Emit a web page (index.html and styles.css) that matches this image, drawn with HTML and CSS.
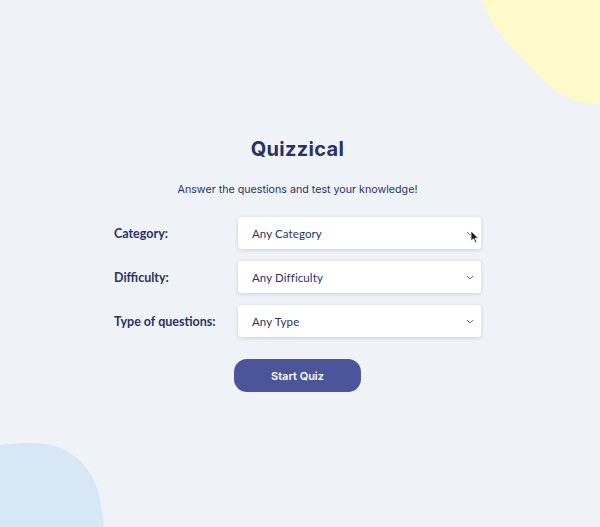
FILE: index.html
```html
<!DOCTYPE html>
<html lang="en">
<head>
<meta charset="utf-8">
<title>Quizzical</title>
<link rel="stylesheet" href="styles.css">
</head>
<body>
<svg class="blob blob-yellow" width="118" height="105" viewBox="0 0 118 105" aria-hidden="true">
  <path d="M0 0 H118 V104 C100 104 85 100 70 88 C58 78 48 66 36 54 C22 40 8 24 0 0 Z" fill="#FFF8C8"/>
</svg>
<svg class="blob blob-blue" width="104" height="84" viewBox="0 0 104 84" aria-hidden="true">
  <path d="M0 2 C15 0 30 -1 45 1 C70 4 90 22 98 48 C101 60 103 72 104 84 H0 Z" fill="#D8E7F6"/>
</svg>
<main class="page">
  <h1 class="title">Quizzical</h1>
  <p class="subtitle">Answer the questions and test your knowledge!</p>
  <form class="form">
    <div class="row">
      <span class="label">Category:</span>
      <div class="select">
        <span>Any Category</span>
        <svg class="chev" width="8" height="5" viewBox="0 0 8 5"><path d="M1 1 L4 4 L7 1" fill="none" stroke="#6b6f80" stroke-width="1"/></svg>
        <svg class="cursor" width="10" height="14" viewBox="0 0 10 14"><path d="M1 1 L1 11 L3.5 8.8 L5.5 13 L7 12.3 L5 8.2 L8.5 8.2 Z" fill="#1a1a1a" stroke="#fff" stroke-width="0.8"/></svg>
      </div>
    </div>
    <div class="row">
      <span class="label">Difficulty:</span>
      <div class="select">
        <span>Any Difficulty</span>
        <svg class="chev" width="8" height="5" viewBox="0 0 8 5"><path d="M1 1 L4 4 L7 1" fill="none" stroke="#6b6f80" stroke-width="1"/></svg>
      </div>
    </div>
    <div class="row">
      <span class="label">Type of questions:</span>
      <div class="select">
        <span>Any Type</span>
        <svg class="chev" width="8" height="5" viewBox="0 0 8 5"><path d="M1 1 L4 4 L7 1" fill="none" stroke="#6b6f80" stroke-width="1"/></svg>
      </div>
    </div>
  </form>
  <button class="start" type="button">Start Quiz</button>
</main>
</body>
</html>
```
FILE: styles.css
```css
* { box-sizing: border-box; }
html, body { margin: 0; padding: 0; }
body {
  width: 600px;
  height: 527px;
  overflow: hidden;
  position: relative;
  background: #EFF3F8;
  font-family: Inter, "Noto Sans", sans-serif;
  color: #293264;
}
.blob { position: absolute; display: block; }
.blob-yellow { top: 0; right: 0; }
.blob-blue { bottom: 0; left: 0; }
.page {
  position: relative;
  display: flex;
  flex-direction: column;
  align-items: center;
  padding-top: 135px;
  padding-right: 5px;
}
.title {
  margin: 0;
  font-size: 20px;
  line-height: 28px;
  font-weight: 700;
  letter-spacing: 0.3px;
}
.subtitle {
  margin: 20px 0 0;
  font-size: 10.7px;
  line-height: 14px;
}
.form {
  margin-top: 20px;
  display: flex;
  flex-direction: column;
  gap: 12px;
}
.row {
  display: grid;
  grid-template-columns: 124px 243px;
  align-items: center;
}
.label {
  font-family: Lato, Inter, sans-serif;
  font-size: 12.5px;
  font-weight: 700;
  letter-spacing: 0;
}
.select {
  position: relative;
  height: 32px;
  background: #fff;
  border-radius: 3px;
  box-shadow: 0 1px 4px rgba(40, 50, 90, 0.18);
  display: flex;
  align-items: center;
  justify-content: space-between;
  padding: 0 7px 0 14px;
  font-family: Lato, Inter, sans-serif;
  font-size: 11.5px;
  letter-spacing: 0.1px;
}
.chev { display: block; }
.cursor { position: absolute; right: 1px; top: 13px; }
.start {
  margin-top: 22px;
  width: 127px;
  height: 33px;
  border: 0;
  border-radius: 13px;
  background: #4A5699;
  color: #fff;
  font-family: Inter, "Noto Sans", sans-serif;
  font-size: 11px;
  font-weight: 600;
}
```
